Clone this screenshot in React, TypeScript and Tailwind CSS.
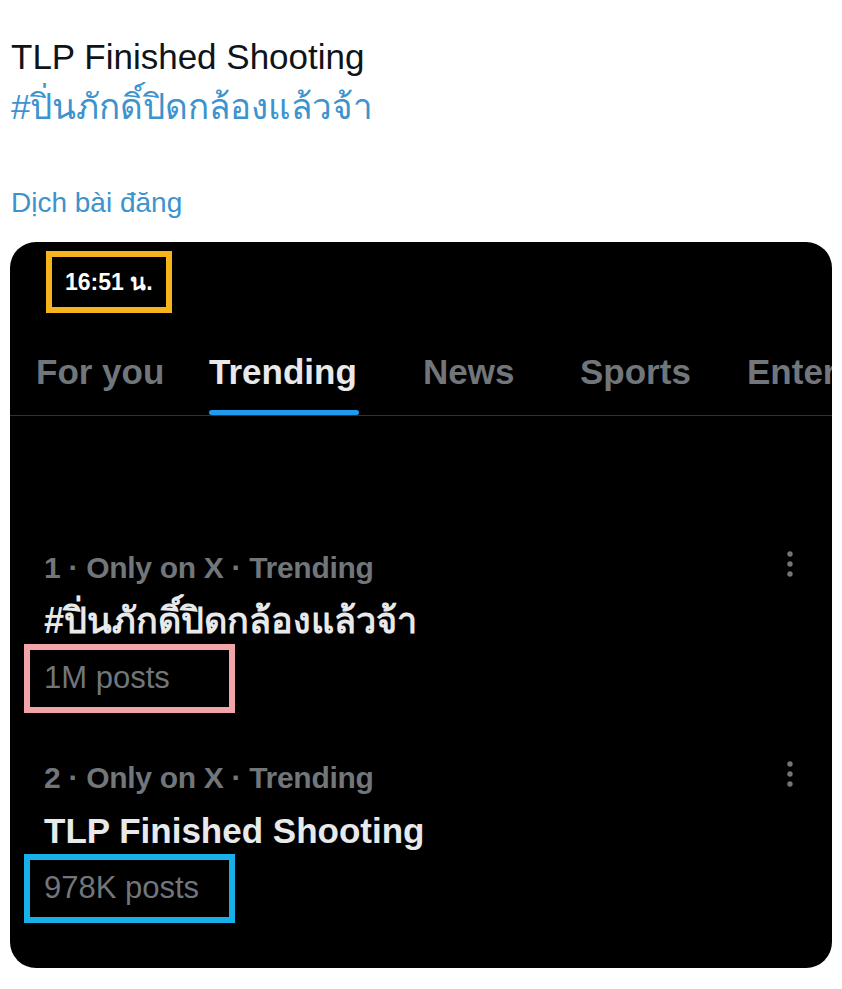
import { ReactNode } from "react"

const tabs = [
  { label: "For you", width: "w-[173px]", active: false },
  { label: "Trending", width: "w-[214px]", active: true },
  { label: "News", width: "w-[157px]", active: false },
  { label: "Sports", width: "w-[167px]", active: false },
  { label: "Entertainment", width: "w-[200px]", active: false },
]

function MoreDots() {
  return (
    <svg width="8" height="28" viewBox="0 0 8 28" className="shrink-0">
      <circle cx="4" cy="4" r="2.7" fill="#71767b" />
      <circle cx="4" cy="14" r="2.7" fill="#71767b" />
      <circle cx="4" cy="24" r="2.7" fill="#71767b" />
    </svg>
  )
}

function TrendItem({
  rank,
  title,
  titleSize,
  posts,
  boxColor,
}: {
  rank: number
  title: ReactNode
  titleSize: string
  posts: string
  boxColor: string
}) {
  return (
    <div className="flex flex-col pl-[34px] pr-[38px]">
      <div className="flex items-center justify-between">
        <span className="text-[30px] leading-[36px] font-bold text-[#71767b] tracking-[-0.3px]">
          {rank} · Only on X · Trending
        </span>
        <div className="-mt-[8px]">
          <MoreDots />
        </div>
      </div>
      <div className={`mt-[13px] leading-[44px] font-bold text-[#e7e9ea] ${titleSize}`}>{title}</div>
      <div
        className={`-ml-[20px] mt-[1px] flex h-[69px] w-[211px] items-center border-[6px] pl-[14px] text-[31px] text-[#71767b] ${boxColor}`}
      >
        {posts}
      </div>
    </div>
  )
}

export default function App() {
  return (
    <div className="min-h-[989px] w-[842px] bg-white font-['Liberation_Sans',Arial,'Noto_Sans',sans-serif]">
      <div className="pl-[11px] pt-[32px]">
        <p className="text-[35px] leading-[50px] text-[#0f1419]">TLP Finished Shooting</p>
        <p className="text-[35px] leading-[50px] text-[#3c93cd]">#ปิ่นภักดิ์ปิดกล้องแล้วจ้า</p>
        <p className="mt-[53px] text-[28px] leading-[36px] text-[#3c93cd]">Dịch bài đăng</p>
      </div>

      <div className="ml-[10px] mt-[21px] h-[726px] w-[822px] overflow-hidden rounded-[26px] bg-black">
        {/* Status bar time */}
        <div className="ml-[36px] mt-[9px] flex h-[62px] w-[126px] items-center border-[6px] border-[#f6b31b] pl-[13px] text-[23px] font-bold text-white">
          16:51 น.
        </div>

        {/* Tabs */}
        <div className="mt-[39px] flex border-b border-[#2f3336] pl-[26px] whitespace-nowrap">
          {tabs.map((tab) => (
            <div key={tab.label} className={`flex shrink-0 flex-col ${tab.width}`}>
              <span
                className={`text-[35px] leading-[40px] font-bold ${
                  tab.active ? "text-[#e7e9ea]" : "text-[#71767b]"
                }`}
              >
                {tab.label}
              </span>
              <div
                className={`mt-[18px] h-[5px] w-[150px] rounded-full ${tab.active ? "bg-[#1d9bf0]" : "bg-transparent"}`}
              />
            </div>
          ))}
        </div>

        {/* Trends */}
        <div className="flex flex-col gap-[47px] pt-[134px]">
          <TrendItem
            rank={1}
            title="#ปิ่นภักดิ์ปิดกล้องแล้วจ้า"
            titleSize="text-[36px]"
            posts="1M posts"
            boxColor="border-[#f3a3aa]"
          />
          <TrendItem
            rank={2}
            title="TLP Finished Shooting"
            titleSize="text-[35px]"
            posts="978K posts"
            boxColor="border-[#17b0ea]"
          />
        </div>
      </div>
    </div>
  )
}
